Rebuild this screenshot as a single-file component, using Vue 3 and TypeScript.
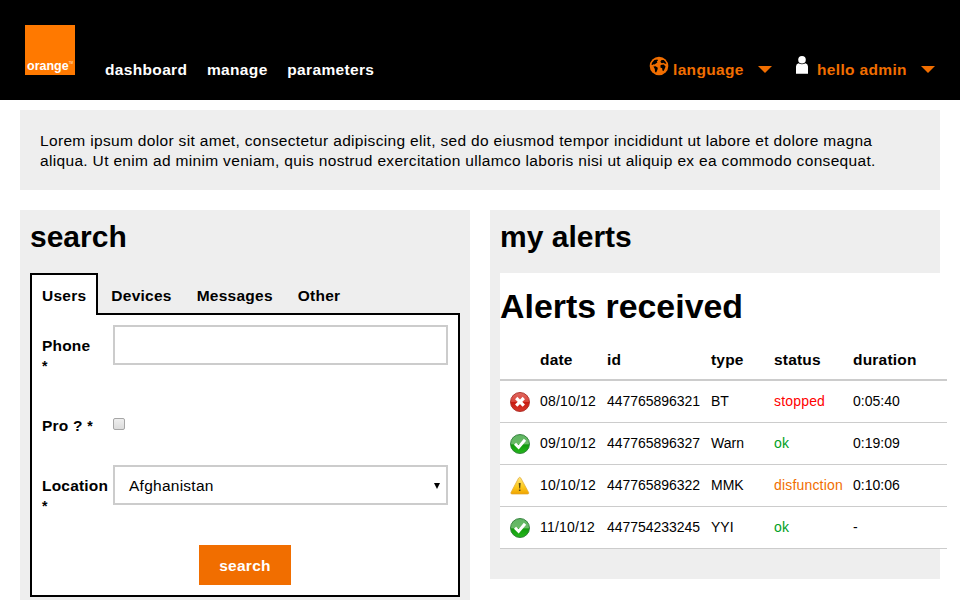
<script setup lang="ts">
import { ref } from 'vue'

type Kind = 'error' | 'success' | 'warning'

interface Alert {
  kind: Kind
  date: string
  id: string
  type: string
  status: string
  duration: string
}

const links: string[] = ['dashboard', 'manage', 'parameters']
const tabs: string[] = ['Users', 'Devices', 'Messages', 'Other']
const activeTab = ref('Users')
const phone = ref('')
const pro = ref(false)
const location = ref('Afghanistan')

const columns: string[] = ['date', 'id', 'type', 'status', 'duration']
const alerts: Alert[] = [
  { kind: 'error', date: '08/10/12', id: '447765896321', type: 'BT', status: 'stopped', duration: '0:05:40' },
  { kind: 'success', date: '09/10/12', id: '447765896327', type: 'Warn', status: 'ok', duration: '0:19:09' },
  { kind: 'warning', date: '10/10/12', id: '447765896322', type: 'MMK', status: 'disfunction', duration: '0:10:06' },
  { kind: 'success', date: '11/10/12', id: '447754233245', type: 'YYI', status: 'ok', duration: '-' },
]
</script>

<template>
  <div class="page">
    <svg class="defs" width="0" height="0" aria-hidden="true">
      <defs>
        <linearGradient id="red" x1="0" y1="0" x2="0" y2="1">
          <stop offset="0" stop-color="#e06a62" />
          <stop offset="0.5" stop-color="#d94238" />
          <stop offset="0.52" stop-color="#c81a10" />
          <stop offset="1" stop-color="#d8382c" />
        </linearGradient>
        <linearGradient id="green" x1="0" y1="0" x2="0" y2="1">
          <stop offset="0" stop-color="#5fb562" />
          <stop offset="0.5" stop-color="#6abb68" />
          <stop offset="0.54" stop-color="#119a0c" />
          <stop offset="1" stop-color="#25b81c" />
        </linearGradient>
        <linearGradient id="yellow" x1="0" y1="0" x2="0" y2="1">
          <stop offset="0" stop-color="#ffe680" />
          <stop offset="0.55" stop-color="#fdcb1e" />
          <stop offset="1" stop-color="#f0a400" />
        </linearGradient>
      </defs>
    </svg>

    <header class="topbar">
      <div class="logo"><span class="brand">orange</span><span class="tm">TM</span></div>
      <nav class="nav">
        <a v-for="link in links" :key="link" class="nav-link">{{ link }}</a>
      </nav>
      <div class="menu">
        <svg class="globe" width="20" height="20" viewBox="0 0 20 20">
          <circle cx="10" cy="10" r="9.3" fill="#f16e00" />
          <path fill="#000" d="M3.2 6.4 5.4 4 8.4 3.4 9 4.6 7.8 5.6 8.4 6.6 6.6 7.8 5.4 8.6 4.4 8.2 3.6 9 2.4 8.6Z" />
          <path fill="#000" d="M4.4 10.4 6.6 10.2 8.8 11.8 8.4 14 7 16.8 6 15.6 5.8 13Z" />
          <path fill="#000" d="M11.4 5.4 12.6 4 14.8 4 16.6 6 17.4 8 15.6 7.6 14.4 6.8 13 7.2 12 6.8Z" />
          <path fill="#000" d="M11.6 9 14.6 8.6 16.6 10.4 15.8 12.6 14.6 15 13.4 14.4 13.2 12.2 11.4 11.4Z" />
        </svg>
        <span class="menu-text">language</span>
        <svg class="caret" width="14" height="7" viewBox="0 0 14 7"><path d="M0 0H14L7 7Z" fill="#f16e00" /></svg>
      </div>
      <div class="menu">
        <svg class="person" width="14" height="20" viewBox="0 0 14 20">
          <path d="M1 18.8V11.4Q1 9 3.4 8.2Q7 10.4 10.6 8.2Q13 9 13 11.4V18.8Z" fill="#fff" />
          <ellipse cx="7" cy="4.8" rx="3.8" ry="3.8" fill="#fff" />
        </svg>
        <span class="menu-text user">hello admin</span>
        <svg class="caret" width="14" height="7" viewBox="0 0 14 7"><path d="M0 0H14L7 7Z" fill="#f16e00" /></svg>
      </div>
    </header>

    <p class="intro">
      Lorem ipsum dolor sit amet, consectetur adipiscing elit, sed do eiusmod tempor incididunt ut labore et dolore magna<br />
      aliqua. Ut enim ad minim veniam, quis nostrud exercitation ullamco laboris nisi ut aliquip ex ea commodo consequat.
    </p>

    <main class="columns">
      <section class="panel search-panel">
        <h2 class="title">search</h2>
        <div class="tabs">
          <button
            v-for="tab in tabs"
            :key="tab"
            type="button"
            class="tab"
            :class="{ active: tab === activeTab }"
            @click="activeTab = tab"
          >{{ tab }}</button>
        </div>
        <form class="form" @submit.prevent>
          <div class="field">
            <label class="label" for="phone">Phone<br /><span class="star">*</span></label>
            <input id="phone" v-model="phone" class="control" type="text" />
          </div>
          <div class="field short">
            <label class="label" for="pro">Pro ? <span class="star">*</span></label>
            <input id="pro" v-model="pro" class="check" type="checkbox" />
          </div>
          <div class="field">
            <label class="label" for="location">Location<br /><span class="star">*</span></label>
            <div id="location" class="control select">
              <span>{{ location }}</span>
              <svg width="6" height="6" viewBox="0 0 6 6"><path d="M0 0H6L3 6Z" fill="#000" /></svg>
            </div>
          </div>
          <button class="submit" type="submit">search</button>
        </form>
      </section>

      <section class="panel alerts-panel">
        <h2 class="title">my alerts</h2>
        <div class="alerts">
          <h1 class="heading">Alerts received</h1>
          <div class="table">
            <div class="row head">
              <span></span>
              <span v-for="c in columns" :key="c">{{ c }}</span>
            </div>
            <div v-for="a in alerts" :key="a.id" class="row">
              <span class="icon">
                <svg v-if="a.kind === 'error'" width="20" height="20" viewBox="0 0 20 20">
                  <circle cx="10" cy="10" r="9.5" fill="url(#red)" stroke="#a82a22" stroke-width=".9" />
                  <path d="M6.2 6 13.8 13.6M13.8 6 6.2 13.6" stroke="#fff" stroke-width="3.2" />
                </svg>
                <svg v-else-if="a.kind === 'success'" width="20" height="20" viewBox="0 0 20 20">
                  <circle cx="10" cy="10" r="9.5" fill="url(#green)" stroke="#2c7a35" stroke-width=".9" />
                  <path d="M5 9.8 8.6 13.4 15 5.8" fill="none" stroke="#fff" stroke-width="3" />
                </svg>
                <svg v-else width="20" height="20" viewBox="0 0 20 20">
                  <path d="M8.5 2.2Q9.7.4 10.9 2.2L18.6 16.4Q19.2 18 17.6 18H2Q.4 18 1 16.4Z" fill="url(#yellow)" stroke="#e0a52c" stroke-width=".7" />
                  <path d="M8.7 7H10.7L10.2 12.4H9.2ZM8.9 13.4H10.5V15H8.9Z" fill="#5c4a14" />
                </svg>
              </span>
              <span class="date">{{ a.date }}</span>
              <span class="id">{{ a.id }}</span>
              <span>{{ a.type }}</span>
              <span class="status" :class="a.kind">{{ a.status }}</span>
              <span>{{ a.duration }}</span>
            </div>
          </div>
        </div>
      </section>
    </main>
  </div>
</template>

<style>
body {
  background: #fff;
  overflow: hidden;
}
</style>

<style scoped>
.page {
  width: 960px;
  height: 600px;
  overflow: hidden;
  background: #fff;
  color: #000;
  font: 15.5px/20px 'Liberation Sans', Arial, sans-serif;
}
.defs {
  position: absolute;
}
.topbar {
  display: flex;
  align-items: flex-start;
  height: 100px;
  box-sizing: border-box;
  padding: 25px 25px 0;
  background: #000;
  font-weight: 700;
  letter-spacing: 0.34px;
}
.logo {
  display: flex;
  align-items: flex-end;
  width: 50px;
  height: 50px;
  box-sizing: border-box;
  padding: 0 0 0 2px;
  background: #ff7900;
  color: #fff;
  letter-spacing: 0;
}
.brand {
  font-size: 12.5px;
  line-height: 18px;
}
.tm {
  color: #ffd0a0;
  font-size: 3px;
  line-height: 24px;
}
.nav {
  display: flex;
  flex: 1;
  gap: 19.7px;
  margin: 35px 0 0 30px;
  color: #fff;
}
.menu {
  display: flex;
  margin-top: 35px;
  color: #f16e00;
}
.menu + .menu {
  margin-left: 23px;
}
.globe {
  margin: -4px 4px 0 0;
}
.person {
  margin: -5px 8px 0 0;
}
.menu-text {
  width: 71px;
  white-space: nowrap;
}
.menu-text.user {
  width: 90px;
}
.caret {
  margin: 6px 0 0 14px;
}
.intro {
  box-sizing: border-box;
  height: 80px;
  margin: 10px 20px 20px;
  padding: 21px 20px 19px;
  background: #eee;
  letter-spacing: 0.33px;
  white-space: nowrap;
}
.columns {
  display: flex;
  align-items: flex-start;
  gap: 20px;
  padding: 0 20px;
}
.panel {
  box-sizing: border-box;
  width: 450px;
  padding: 10px 10px 0;
  background: #eee;
}
.search-panel {
  height: 420px;
}
.alerts-panel {
  height: 369px;
}
.title {
  height: 53px;
  margin: 0;
  font-size: 30px;
  line-height: 33px;
}
.tabs {
  display: flex;
  height: 42px;
  margin-bottom: -2px;
}
.tab {
  height: 42px;
  padding: 2px 10px 0;
  margin-right: 1px;
  border: 2px solid transparent;
  border-bottom: 0;
  background: transparent;
  color: #000;
  font: 700 15.5px/20px 'Liberation Sans', Arial, sans-serif;
  letter-spacing: 0.25px;
}
.tab.active {
  position: relative;
  border-color: #000;
  background: #fff;
}
.form {
  display: flex;
  flex-direction: column;
  height: 284px;
  box-sizing: border-box;
  padding: 10px 10px 0;
  border: 2px solid #000;
  background: #fff;
}
.field {
  display: flex;
  height: 80px;
}
.field.short {
  height: 60px;
}
.label {
  width: 71px;
  padding-top: 11px;
  font-weight: 700;
  letter-spacing: 0.2px;
}
.star {
  font-size: 14px;
}
.control {
  width: 335px;
  height: 40px;
  box-sizing: border-box;
  margin: 0;
  border: 2px solid #ccc;
  background: #fff;
}
.check {
  appearance: none;
  width: 12px;
  height: 12px;
  margin: 13px 0 0;
  border: 1px solid #a6a6a6;
  border-radius: 2px;
  background: linear-gradient(#eee, #dcdcdc);
}
.select {
  display: flex;
  align-items: center;
  justify-content: space-between;
  padding: 1px 6px 0 14px;
  letter-spacing: 0.25px;
}
.submit {
  width: 92px;
  height: 40px;
  padding: 2px 0 0;
  margin-left: 157px;
  border: 0;
  background: #f16e00;
  color: #fff;
  font: 700 15.5px/20px 'Liberation Sans', Arial, sans-serif;
  letter-spacing: 0.25px;
}
.alerts {
  width: 447px;
  background: #fff;
}
.heading {
  height: 66px;
  box-sizing: border-box;
  margin: 0;
  padding-top: 14px;
  font-size: 33.9px;
  line-height: 38px;
}
.row {
  display: grid;
  grid-template-columns: 40px 67px 104px 63px 79px 94px;
  height: 42px;
  box-sizing: border-box;
  border-bottom: 1px solid #ccc;
  font-size: 14px;
  line-height: 41px;
}
.row.head {
  border-bottom-width: 2px;
  font-size: 15.5px;
  font-weight: 700;
  letter-spacing: 0.2px;
  line-height: 42px;
}
.date,
.status {
  letter-spacing: 0.18px;
}
.id {
  letter-spacing: -0.04px;
}
.icon {
  display: flex;
  padding: 11px 0 0 10px;
}
.error {
  color: #f00;
}
.success {
  color: #00a01e;
}
.warning {
  color: #f16e00;
}
</style>
